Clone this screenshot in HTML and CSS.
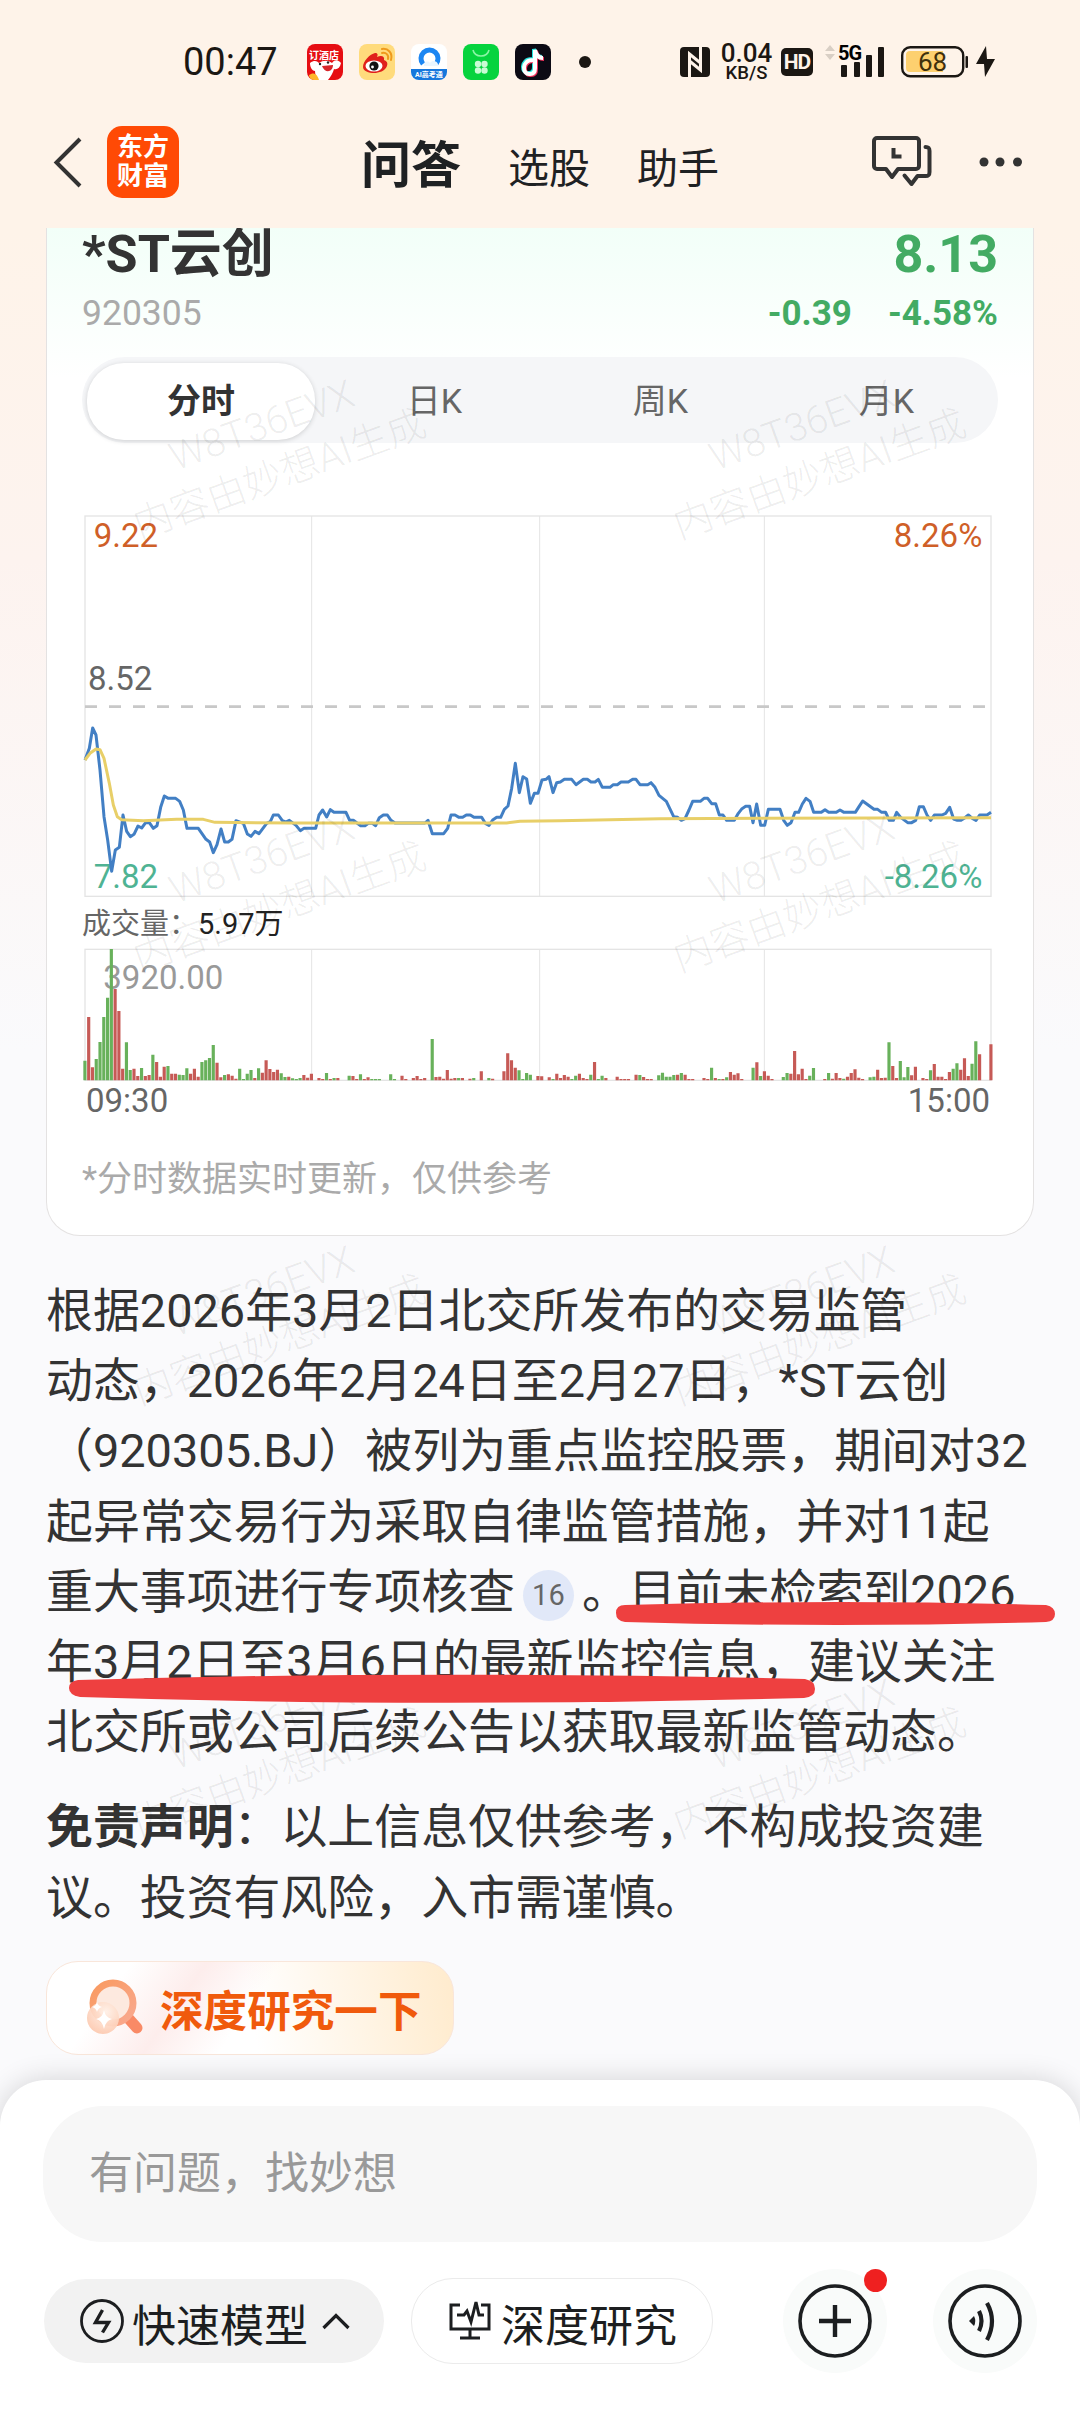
FILE: index.html
```html
<!DOCTYPE html>
<html lang="zh-CN">
<head>
  <meta charset="UTF-8">
  <title>问答 - 东方财富</title>
  <link rel="stylesheet" href="styles.css">
</head>
<body>

<header class="top">
  <div class="status">
    <span class="time">00:47</span>
    <div class="apps">
      <svg width="36" height="36" viewBox="0 0 36 36">
        <rect width="36" height="36" rx="8" fill="#e60d12"/>
        <path d="M3 19c5-4 8-1 9 0 4-3 9-3 13 0 3-4 6-3 9 0-1 5-4 7-7 6-1 4-3 7-6 11H11c-2-3-3-6-3-9-3 0-5-4-5-8z" fill="#fff"/>
        <path d="M15 22l11-1c0 7-8 9-11 1z" fill="#d8262b"/>
        <circle cx="13" cy="20" r="1.200" fill="#222"/><circle cx="21" cy="18.500" r="1.200" fill="#222"/>
        <path d="M2 31c4-3 8-2 10 5H8c-3 0-6-2-6-5z" fill="#ffb52a"/>
        <text x="17" y="15" class="ad-text">订酒店</text>
      </svg>
      <svg width="36" height="36" viewBox="0 0 36 36">
        <rect width="36" height="36" rx="8" fill="#ffdb7c"/>
        <path d="M4 23c0-6 7-13 12-14 3 0 3 2 2 4 4-2 8-1 7 3 3 1 4 3 3 6-2 5-8 7-13 7S4 27 4 23z" fill="#e0201b"/>
        <ellipse cx="15" cy="22" rx="8.500" ry="5.600" fill="#fff"/>
        <circle cx="15" cy="22" r="4.600" fill="#111"/><circle cx="13.500" cy="23" r="1.400" fill="#fff"/>
        <path d="M23 9c4-1 7 2 6 6M23 5c6-1 11 4 9 11" fill="none" stroke="#ef9a1c" stroke-width="2" stroke-linecap="round"/>
      </svg>
      <svg width="36" height="36" viewBox="0 0 36 36">
        <rect width="36" height="36" rx="8" fill="#fff"/>
        <path d="M0 25h36v3a8 8 0 0 1-8 8H8a8 8 0 0 1-8-8z" fill="#1677dc"/>
        <path d="M12 20a8.500 8.500 0 1 1 13 0" fill="none" stroke="#1c86f2" stroke-width="5"/>
        <path d="M13 22c-1-4 4-6 6-3 3-4 9-1 8 3z" fill="#eaf6ff"/>
        <text x="18" y="33" class="ai-text">AI高考通</text>
      </svg>
      <svg width="36" height="36" viewBox="0 0 36 36">
        <rect width="36" height="36" rx="8" fill="#06d33e"/>
        <path d="M10 6c2 8 14 8 16 0" fill="none" stroke="#8bf5a5" stroke-width="1.600"/>
        <g fill="#c9fbd4"><circle cx="15" cy="20" r="3.200"/><circle cx="21.500" cy="20" r="3.200"/><circle cx="15" cy="26.500" r="3.200"/><circle cx="21.500" cy="26.500" r="3.200"/></g>
      </svg>
      <svg width="36" height="36" viewBox="0 0 36 36">
        <rect width="36" height="36" rx="8" fill="#0c0a14"/>
        <g fill="none" stroke-width="4">
          <path d="M17 15c-12 0-11 15-3 14 4 0 5-3 5-6V5c1 5 4 8 8 8" stroke="#25e5e0"/>
          <path d="M19 17c-12 0-11 15-3 14 4 0 5-3 5-6V7c1 5 4 8 8 8" stroke="#f5305c"/>
          <path d="M18 16c-12 0-11 15-3 14 4 0 5-3 5-6V6c1 5 4 8 8 8" stroke="#fff"/>
        </g>
      </svg>
    </div>
    <span class="more-dot"></span>
    <div class="signals">
      <svg width="30" height="30" viewBox="0 0 30 30">
        <rect width="30" height="30" rx="4" fill="#1b1713"/>
        <path d="M9.500 30V7l11 9M20.500 0v23l-11-9" fill="none" stroke="#fef3e9" stroke-width="3"/>
      </svg>
      <div class="speed"><b>0.04</b><span>KB/S</span></div>
      <span class="hd">HD</span>
      <svg class="bars" width="60" height="34" viewBox="0 0 60 34">
        <path d="M5 0l5 6H0zM5 15l5-6H0z" fill="#d9cfc5"/>
        <text x="13" y="15" class="net">5G</text>
        <g fill="#1b1713"><rect x="16" y="20" width="6" height="12" rx="1"/><rect x="29" y="17" width="6" height="15" rx="1"/><rect x="41" y="10" width="6" height="22" rx="1"/><rect x="53" y="2" width="6" height="30" rx="1"/></g>
      </svg>
      <svg class="battery" width="94" height="32" viewBox="0 0 94 32">
        <rect x="1.200" y="1.200" width="61" height="29" rx="8" fill="none" stroke="#1b1713" stroke-width="2.400"/>
        <path d="M9 5h33v21H9a4 4 0 0 1-4-4V9a4 4 0 0 1 4-4z" fill="#fdd06f"/>
        <rect x="64.500" y="10" width="2.500" height="12" rx="1" fill="#1b1713"/>
        <text x="31.500" y="24.500" class="charge">68</text>
        <path d="M85 0L75 18h8l1 13 10-18h-8z" fill="#1b1713"/>
      </svg>
    </div>
  </div>

  <nav class="nav">
    <svg class="back" width="30" height="52" viewBox="0 0 30 52"><path d="M27 3L3.500 26.500 27 50" fill="none" stroke="#333" stroke-width="4"/></svg>
    <div class="logo">东方<br>财富</div>
    <div class="nav-tabs">
      <b>问答</b><span>选股</span><span>助手</span>
    </div>
    <svg class="history" width="60" height="52" viewBox="0 0 60 52" fill="none" stroke="#333" stroke-width="4" stroke-linejoin="round" stroke-linecap="round">
      <path d="M5 2h39a3 3 0 0 1 3 3v25a3 3 0 0 1-3 3H26l-6 8-6-8H5a3 3 0 0 1-3-3V5a3 3 0 0 1 3-3z"/>
      <path d="M53.500 11c3 0 4 1 4 4v21c0 3-1 4-4 4h-8l-6 8-7-8.500"/>
      <path d="M21.500 12v8.500h8" stroke-linecap="butt" stroke-linejoin="miter"/>
    </svg>
    <svg class="dots" width="44" height="10" viewBox="0 0 44 10" fill="#333"><circle cx="5" cy="5" r="4.500"/><circle cx="21" cy="5" r="4.500"/><circle cx="38.500" cy="5" r="4.500"/></svg>
  </nav>
</header>

<main class="chat">
  <section class="card">
    <div class="row title-row"><b>*ST云创</b><b class="down">8.13</b></div>
    <div class="row sub-row"><span>920305</span><b class="down"><span>-0.39</span><span>-4.58%</span></b></div>

    <div class="tabs">
      <b class="on">分时</b><span>日K</span><span>周K</span><span>月K</span>
    </div>

    <svg class="price" width="916" height="390" viewBox="66 30 2748 1170">
      <g fill="none" stroke="#e4e4e4" stroke-width="4">
        <rect x="75" y="48" width="2718" height="1141"/>
        <path d="M755 48V1189M1439 48V1189M2113 48V1189" stroke-width="3"/>
      </g>
      <path d="M75 620H2793" stroke="#c8c8c8" stroke-width="8" stroke-dasharray="36 36"/>
      <text x="101" y="140" fill="#cf5f28">9.22</text>
      <text x="84" y="570" fill="#666">8.52</text>
      <text x="101" y="1163" fill="#4fb393">7.82</text>
      <text x="2767" y="140" fill="#cf5f28" text-anchor="end">8.26%</text>
      <text x="2767" y="1163" fill="#4fb393" text-anchor="end">-8.26%</text>
      <polyline class="line" stroke="#427fc4" points="75,780 88,745 98,684 108,705 120,810 132,950 143,1020 155,1114 166,1050 178,1042 189,945 200,994 211,1010 222,1003 234,978 245,984 257,968 268,968 280,985 291,977 302,922 313,888 325,895 347,895 359,904 370,930 381,985 415,985 438,1018 449,1026 460,1058 471,1034 483,987 494,1026 505,1026 516,1018 528,962 550,970 562,1002 573,1009 585,994 597,1001 620,970 631,965 640,945 655,945 667,962 677,966 688,961 708,976 721,992 732,985 767,985 777,945 788,930 800,951 811,929 822,937 858,937 869,961 880,961 902,977 915,977 925,970 937,970 947,977 958,953 970,945 982,945 993,961 1005,969 1095,969 1104,961 1117,1001 1151,1001 1163,985 1173,945 1185,945 1197,952 1208,952 1219,945 1231,945 1242,952 1265,952 1276,970 1287,976 1298,960 1310,952 1322,952 1333,928 1344,918 1355,865 1366,790 1378,878 1389,830 1400,837 1411,910 1423,880 1434,880 1446,840 1458,838 1467,830 1479,878 1490,848 1501,846 1513,838 1535,838 1548,854 1570,838 1582,838 1593,846 1605,846 1615,838 1627,862 1650,862 1660,854 1672,854 1683,846 1705,846 1718,838 1728,838 1740,854 1763,854 1773,848 1785,862 1797,886 1819,904 1841,950 1853,952 1864,961 1875,956 1887,930 1898,904 1921,904 1932,895 1943,895 1955,911 1967,911 1978,945 1989,945 2000,961 2023,961 2035,940 2046,926 2057,919 2069,919 2079,968 2090,912 2102,976 2114,976 2125,928 2160,928 2171,961 2182,976 2193,968 2205,937 2216,937 2227,912 2238,895 2250,904 2261,937 2284,937 2295,929 2306,937 2329,937 2340,930 2352,937 2386,937 2397,920 2408,903 2442,928 2453,928 2465,937 2477,937 2488,961 2500,961 2510,937 2522,952 2543,968 2555,968 2567,961 2578,920 2590,920 2601,945 2612,961 2623,945 2646,945 2657,940 2669,922 2681,957 2692,961 2703,961 2714,954 2725,945 2737,955 2748,961 2759,945 2781,945 2793,937"/>
      <polyline class="line" stroke="#e8cf68" points="75,780 90,760 108,747 120,749 132,775 148,850 160,915 172,950 185,959 250,962 350,958 430,958 465,967 700,969 1340,969 1380,964 1500,962 1800,956 2793,953"/>
    </svg>

    <div class="vol-label">成交量：<span>5.97万</span></div>

    <svg class="volume" width="916" height="139" viewBox="66 135 2748 417">
      <g fill="none" stroke="#e4e4e4" stroke-width="4">
        <rect x="75" y="148" width="2718" height="393"/>
        <path d="M755 148V541M1439 148V541M2113 148V541" stroke-width="3"/>
      </g>
      <text x="130" y="267" fill="#999">3920.00</text>
      <path id="up" fill="#c65a56"/>
      <path id="down" fill="#68b15b"/>
    </svg>
    <div class="row hours"><span>09:30</span><span>15:00</span></div>

    <p class="note">*分时数据实时更新，仅供参考</p>
  </section>

  <div class="answer">
    <p>根据2026年3月2日北交所发布的交易监管<br>动态，2026年2月24日至2月27日，*ST云创<br>（920305.BJ）被列为重点监控股票，期间对32<br>起异常交易行为采取自律监管措施，并对11起<br>重大事项进行专项核查<span class="ref">16</span>。目前未检索到2026<br>年3月2日至3月6日的最新监控信息，建议关注<br>北交所或公司后续公告以获取最新监管动态。</p>
    <p><b>免责声明</b>：以上信息仅供参考，不构成投资建<br>议。投资有风险，入市需谨慎。</p>
  </div>

  <div class="deep">
    <svg width="60" height="60" viewBox="0 0 60 60">
      <defs>
        <linearGradient id="ring" x1="0" y1="0" x2="1" y2="1"><stop offset="0" stop-color="#f99a60"/><stop offset="1" stop-color="#f9a990"/></linearGradient>
        <radialGradient id="ball" cx=".6" cy=".3" r=".8"><stop offset="0" stop-color="#fff1e8"/><stop offset="1" stop-color="#fcc4a8"/></radialGradient>
      </defs>
      <path d="M43 41l8 9" stroke="#f98a66" stroke-width="11" stroke-linecap="round"/>
      <circle cx="27" cy="25" r="20" fill="#fde9df" stroke="url(#ring)" stroke-width="7"/>
      <circle cx="17" cy="40" r="16" fill="url(#ball)" opacity=".92"/>
      <path d="M18 32q1.500 8 8 9-6.500 1.500-8 10-1.500-8.500-8-10 6.500-1 8-9zM11 24q1 4 5 5-4 1-5 5-1-4-5-5 4-1 5-5z" fill="#fff"/>
    </svg>
    <b>深度研究一下</b>
  </div>

  <!-- 水印 -->
  <svg class="watermark" width="1080" height="1852" viewBox="0 228 1080 1852">
    <defs>
      <g id="wm" transform="rotate(-20)">
        <text y="-14">W8T36EVX</text>
        <text y="38">内容由妙想AI生成</text>
      </g>
    </defs>
    <use href="#wm" transform="translate(271 451)"/><use href="#wm" transform="translate(811 451)"/>
    <use href="#wm" transform="translate(271 884)"/><use href="#wm" transform="translate(811 884)"/>
    <use href="#wm" transform="translate(271 1317)"/><use href="#wm" transform="translate(811 1317)"/>
    <use href="#wm" transform="translate(271 1750)"/><use href="#wm" transform="translate(811 1750)"/>
  </svg>

  <!-- 红线标注 -->
  <svg class="marks" width="1080" height="1852" viewBox="0 228 1080 1852" fill="#ee4040">
    <path d="M625 1605Q840 1599 1046 1605Q1055 1607 1055 1614T1046 1622Q840 1628 625 1622Q616 1621 616 1613T625 1605z"/>
    <path d="M78 1680Q420 1670 805 1679Q815 1681 815 1689T804 1698Q420 1708 80 1697Q69 1695 69 1688T78 1680z"/>
  </svg>
</main>

<footer class="panel">
  <div class="input">有问题，找妙想</div>
  <div class="tools">
    <div class="pill gray">
      <svg width="44" height="44" viewBox="0 0 44 44" fill="none" stroke="#1c1e20" stroke-width="2.800"><circle cx="22" cy="22" r="20.500"/><path d="M22.500 11l-7 12.500h13l-6 10" stroke-width="3.400"/></svg>
      <span>快速模型</span>
      <svg width="28" height="18" viewBox="0 0 28 18"><path d="M1.500 16L14 3.500 26.500 16" fill="none" stroke="#1c1e20" stroke-width="3.200"/></svg>
    </div>
    <div class="pill line-pill">
      <svg width="42" height="40" viewBox="0 0 42 40" fill="none" stroke="#1c1e20" stroke-width="3"><path d="M11 4H2v24h38V4h-8M21 28v8M11 37h20M8 14h7l3-4 4 11 5-20 3 13h5"/></svg>
      <span>深度研究</span>
    </div>
    <div class="round">
      <svg width="76" height="76" viewBox="0 0 76 76" fill="none" stroke="#1c1e20"><circle cx="38" cy="38" r="35" stroke-width="3.600"/><path d="M22 38h32M38 22v32" stroke-width="4.400"/></svg>
      <i class="red"></i>
    </div>
    <div class="round">
      <svg width="76" height="76" viewBox="0 0 76 76" fill="none" stroke="#1c1e20"><circle cx="38" cy="38" r="35" stroke-width="3.600"/><path d="M32 28q5 10 0 20M40 20q10 18 0 37" stroke-width="4.200"/><path d="M22 38l5-5q2.500 5 0 10z" fill="#1c1e20" stroke="none"/></svg>
    </div>
  </div>
</footer>

<script src="volume.js"></script>
</body>
</html>
```
FILE: styles.css
```css
* {
  box-sizing: border-box;
}
body {
  margin: 0;
  width: 1080px;
  height: 2412px;
  display: flex;
  flex-direction: column;
  overflow: hidden;
  font-family: Roboto, "Noto Sans CJK SC", sans-serif;
  color: #333;
  background: linear-gradient(#fef3e9 0, #fef3e9 230px, #fdf3ef 560px, #fafafc 1050px);
}
p {
  margin: 0;
}
svg {
  display: block;
  flex: none;
}

/* 顶部 */
.top {
  height: 228px;
  flex: none;
}
.status {
  height: 124px;
  padding: 0 85px 0 183px;
  display: flex;
  align-items: center;
  color: #1b1713;
}
.time {
  width: 124px;
  font-size: 38px;
}
.apps {
  display: flex;
  gap: 16px;
}
.ad-text {
  font-size: 10px;
  font-weight: 700;
  fill: #fff;
  text-anchor: middle;
}
.ai-text {
  font-size: 7px;
  font-weight: 700;
  fill: #fff;
  text-anchor: middle;
}
.more-dot {
  width: 12px;
  height: 12px;
  margin-left: 28px;
  border-radius: 50%;
  background: #1b1713;
}
.signals {
  margin-left: auto;
  display: flex;
  align-items: center;
}
.speed {
  width: 53px;
  margin: 0 8px 0 10px;
  display: flex;
  flex-direction: column;
  align-items: center;
  line-height: 18px;
  font-size: 18.5px;
  font-weight: 500;
}
.speed b {
  line-height: 21px;
  font-size: 26px;
  font-weight: 500;
}
.hd {
  width: 32px;
  height: 28px;
  border-radius: 5px;
  background: #1b1713;
  color: #fef3e9;
  font-size: 21px;
  font-weight: 700;
  line-height: 28px;
  letter-spacing: -1px;
  text-align: center;
}
.bars {
  margin-left: 12px;
}
.net {
  font-size: 20px;
  font-weight: 700;
  letter-spacing: -1px;
}
.battery {
  margin-left: 16px;
}
.charge {
  font-size: 26px;
  fill: #40300c;
  text-anchor: middle;
}
.nav {
  height: 76px;
  padding: 0 57px 0 53px;
  display: flex;
  align-items: center;
}
.logo {
  width: 72px;
  height: 72px;
  margin-left: 24px;
  padding-top: 7px;
  border-radius: 15px;
  background: #ff4a05;
  color: #fff;
  font-size: 26px;
  font-weight: 700;
  line-height: 29px;
  text-align: center;
}
.nav-tabs {
  margin: -3px 0 0 182px;
  display: flex;
  align-items: baseline;
  gap: 47px;
  color: #1f2123;
  font-size: 41px;
}
.nav-tabs b {
  font-size: 50px;
}
.history {
  margin-left: auto;
}
.dots {
  margin-left: 47px;
}

/* 行情卡片 */
.chat {
  position: relative;
  flex: 1;
  overflow: hidden;
}
.card {
  width: 988px;
  height: 1008px;
  margin-left: 46px;
  padding: 0 35px;
  border: 1px solid #e4e2e2;
  border-top: 0;
  border-radius: 0 0 34px 34px;
  background: linear-gradient(#f2fff8, #fff 150px);
}
.row {
  display: flex;
  justify-content: space-between;
}
.down {
  color: #43ab63;
}
.title-row {
  height: 50px;
  line-height: 53px;
  font-size: 52px;
}
.sub-row {
  margin-top: 14px;
  height: 40px;
  line-height: 43px;
  font-size: 35.5px;
  color: #aaa;
}
.sub-row .down {
  font-size: 35px;
}
.sub-row .down span {
  margin-left: 36px;
}
.tabs {
  height: 86px;
  margin-top: 25px;
  padding: 6px 0 6px 5px;
  display: grid;
  grid-template-columns: 228px repeat(3, 226px);
  column-gap: 0;
  border-radius: 43px;
  background: #f5f6f8;
  color: #666;
  font-size: 34px;
  line-height: 77px;
  text-align: center;
}
.tabs span {
  padding-left: 13px;
}
.tabs .on {
  border-radius: 37px;
  background: #fff;
  color: #333;
  box-shadow: 0 1px 5px rgba(0, 0, 0, .16);
}
.price {
  margin-top: 67px;
}
.price text, .volume text {
  font-size: 99px;
}
.line {
  fill: none;
  stroke-width: 9;
  stroke-linejoin: round;
}
.vol-label {
  height: 45px;
  line-height: 48px;
  font-size: 29px;
  color: #666;
}
.vol-label span {
  color: #222;
}
.hours {
  padding: 0 8px 0 4px;
  height: 34px;
  line-height: 34px;
  font-size: 33px;
  color: #666;
}
.note {
  margin-top: 42px;
  line-height: 40px;
  font-size: 35px;
  color: #aaa;
}

/* 回答正文 */
.answer {
  margin: 40px 0 0 46px;
  font-size: 46.9px;
  line-height: 70.2px;
  white-space: nowrap;
}
.answer p + p {
  margin-top: 25px;
}
.ref {
  display: inline-block;
  width: 51px;
  height: 51px;
  margin: 0 8px;
  border-radius: 50%;
  background: #e1e8f8;
  color: #666;
  font-size: 29px;
  line-height: 51px;
  text-align: center;
  vertical-align: 3px;
}
.deep {
  width: 408px;
  height: 94px;
  margin: 28px 0 0 46px;
  padding-left: 39px;
  display: flex;
  align-items: center;
  gap: 14px;
  border: 1px solid #f9e6da;
  border-radius: 32px;
  background: linear-gradient(125deg, rgba(255, 255, 255, 0) 18%, #fdedec 34%, rgba(255, 255, 255, 0) 50%), linear-gradient(80deg, #fff 50%, #ffebcd);
  color: #f05a0c;
  font-size: 43.6px;
}
.watermark, .marks {
  position: absolute;
  left: 0;
  top: 0;
}
.watermark text {
  font-size: 39px;
  font-weight: 300;
  fill: rgba(0, 0, 0, .075);
  text-anchor: middle;
}

/* 底部输入 */
.panel {
  position: relative;
  height: 332px;
  flex: none;
  padding: 26px 43px 0;
  border-radius: 46px 46px 0 0;
  background: #fff;
  box-shadow: 0 0 28px rgba(0, 0, 0, .16);
}
.input {
  height: 136px;
  padding-left: 46px;
  border-radius: 60px;
  background: #f7f7f7;
  color: #999;
  font-size: 44px;
  line-height: 137px;
}
.tools {
  height: 104px;
  margin-top: 27px;
  display: flex;
  align-items: center;
  color: #1c1e20;
  font-size: 44px;
}
.pill {
  height: 84px;
  border-radius: 42px;
  display: flex;
  align-items: center;
}
.pill span {
  padding-top: 3px;
}
.gray {
  width: 340px;
  margin-left: 1px;
  padding-left: 36px;
  background: #f2f2f2;
}
.gray span {
  margin: 0 14px 0 8px;
}
.line-pill {
  width: 302px;
  height: 86px;
  margin-left: 27px;
  padding-left: 37px;
  gap: 10px;
  border: 1px solid #ebebeb;
}
.round {
  position: relative;
  width: 104px;
  height: 104px;
  margin-left: 70px;
  display: flex;
  align-items: center;
  justify-content: center;
  border-radius: 50%;
  background: #f9fbfa;
}
.round + .round {
  margin-left: 46px;
}
.red {
  position: absolute;
  right: 0;
  top: 0;
  width: 23px;
  height: 23px;
  border-radius: 50%;
  background: #ef2020;
}
```
FILE: volume.js
```js
// r = up, g = down, number = y of the bar's top, - = no trade
const bars = `g482 r351 r502 g477 g426 g351 g293 g147 r267 r333 r506 g427 g510 r506 r528 g504 r528 r525 g464 r486
r530 r500 g498 r521 r521 g524 g525 g505 r521 r506 r530 g486 g481 g474 g435 r488 r532 g525 r523 r527
r536 g506 g537 g521 g510 r534 g505 r518 r481 r507 r516 r509 g520 g531 r530 g535 g537 g534 r525 r533
r521 - r534 r537 g519 r537 g534 r534 - - g527 r528 r537 g523 r537 r532 g537 g537 g537 -
- g523 g537 - r527 r537 - r534 r528 r537 r534 - g417 r531 r530 r536 r510 r536 r534 g534
r534 - r536 g534 - r514 - g534 r536 - - r514 r460 r481 r503 g511 g537 g519 g524 -
r528 r529 - r532 g537 r521 r534 r525 r530 g537 g527 r521 r534 r537 g524 r486 g537 g527 r534 -
- r530 r537 r537 r537 - r524 g525 r531 r537 r537 - g526 g518 g530 g530 g525 r524 g519 r524
r537 r537 - - r534 r537 g503 r534 g537 r537 g532 r516 r524 r520 r537 - - g503 r487 g528
r514 r527 r537 - - g531 g519 r521 r453 r523 r506 r537 g527 g504 - - r537 g519 r536 r519
r534 g536 r530 r519 r508 r533 r537 - g532 g530 r509 r534 r533 g427 r498 r534 g483 g532 g501 r526
r500 - r534 r537 g511 r492 r530 r530 r537 r516 g506 g490 r509 r475 r528 g491 g424 r463 - -
r433`.split(/\s+/);

const paths = { r: '', g: '' };
bars.forEach((bar, i) => {
  if (bar === '-') return;
  const x = 70 + i * 11.325;
  paths[bar[0]] += `M${x} 541V${bar.slice(1)}h9.500V541z`;
});
document.getElementById('up').setAttribute('d', paths.r);
document.getElementById('down').setAttribute('d', paths.g);
```
